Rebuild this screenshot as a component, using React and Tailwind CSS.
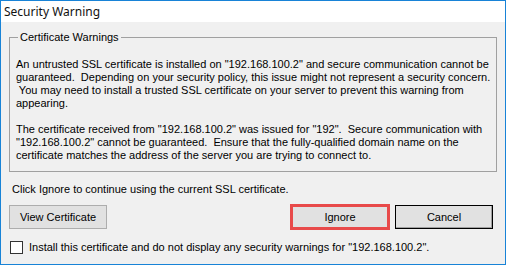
import React from "react";

export default function App() {
  return (
    <div className="w-[506px] h-[265px] border border-[#1883d7] bg-[#f0f0f0] flex flex-col overflow-hidden text-[11px] leading-[13px] text-black font-['Tahoma','Liberation_Sans',sans-serif]">
      <div className="h-[21px] shrink-0 bg-white pl-[3px] flex items-center text-[12px] font-['Segoe_UI','Noto_Sans',sans-serif] text-[#111]">
        Security Warning
      </div>
      <div className="flex flex-col pl-[8px] pr-[9px] pt-[9px]">
        <fieldset className="border border-[#a0a0a0] pl-[6px] pr-[6px] pb-[9px]">
          <legend className="ml-[2px] px-[2px]">Certificate Warnings</legend>
          <p className="mt-[14px] whitespace-pre">
            {'An untrusted SSL certificate is installed on "192.168.100.2" and secure communication cannot be\nguaranteed.  Depending on your security policy, this issue might not represent a security concern.\n You may need to install a trusted SSL certificate on your server to prevent this warning from\nappearing.\n\nThe certificate received from "192.168.100.2" was issued for "192".  Secure communication with\n"192.168.100.2" cannot be guaranteed.  Ensure that the fully-qualified domain name on the\ncertificate matches the address of the server you are trying to connect to.'}
          </p>
        </fieldset>
        <p className="mt-[11px] pl-[3px]">Click Ignore to continue using the current SSL certificate.</p>
        <div className="mt-[8px] flex items-center">
          <button className="w-[98px] h-[24px] border border-[#adadad] bg-[#e1e1e1] text-[11px] leading-[13px]">
            View Certificate
          </button>
          <button className="ml-auto w-[100px] h-[26px] border-[3px] border-[#e84a4a] bg-[#e1e1e1] text-[11px] leading-[13px]">
            Ignore
          </button>
          <button className="ml-[5px] mr-[3px] w-[98px] h-[24px] border border-black bg-[#e1e1e1] shadow-[inset_-1px_-1px_0_#a0a0a0] text-[11px] leading-[13px]">
            Cancel
          </button>
        </div>
        <label className="mt-[11px] flex items-center">
          <span className="ml-[1px] w-[13px] h-[13px] border border-[#333] bg-white shrink-0"></span>
          <span className="ml-[6px]">Install this certificate and do not display any security warnings for "192.168.100.2".</span>
        </label>
      </div>
    </div>
  );
}
